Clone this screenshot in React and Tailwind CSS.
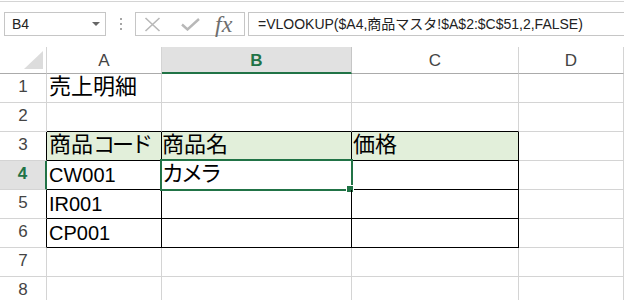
import { Fragment } from "react";

function XIcon() {
  return (
    <svg width="17" height="15" viewBox="0 0 17 15" className="block">
      <path d="M1.5 1 L15.5 14 M15.5 1 L1.5 14" stroke="#b8b8b8" strokeWidth="1.6" fill="none" />
    </svg>
  );
}

function CheckIcon() {
  return (
    <svg width="19" height="13" viewBox="0 0 19 13" className="block">
      <path d="M1 6.5 L6.5 11.5 L18 1" stroke="#b8b8b8" strokeWidth="2.4" fill="none" />
    </svg>
  );
}

function Toolbar() {
  return (
    <div className="h-[46px]">
      <div className="mt-px h-px bg-[#d4d4d4]" />
      <div className="flex pt-[10px] font-['Liberation_Sans','Noto_Sans_CJK_JP',sans-serif] text-[13px] text-[#222]">
        <div className="ml-[4px] flex h-[24px] w-[102px] items-center justify-between border border-[#c6c6c6] pl-[7px] pr-[5px]">
          <span className="text-[14px]">B4</span>
          <svg width="8" height="4" viewBox="0 0 8 4" className="block">
            <path d="M0 0 L8 0 L4 4 Z" fill="#666" />
          </svg>
        </div>
        <div className="ml-[14px] mr-[13px] flex flex-col items-center justify-center gap-[3px]">
          <span className="block h-[2px] w-[2px] bg-[#a6a6a6]" />
          <span className="block h-[2px] w-[2px] bg-[#a6a6a6]" />
          <span className="block h-[2px] w-[2px] bg-[#a6a6a6]" />
        </div>
        <div className="flex h-[24px] w-[110px] items-center border border-[#c6c6c6] pl-[8px]">
          <XIcon />
          <span className="ml-[20px]">
            <CheckIcon />
          </span>
          <span className="ml-[15px] font-['Liberation_Serif',serif] text-[24px] italic leading-none text-[#6e6e6e]">fx</span>
        </div>
        <div className="ml-[3px] flex h-[24px] flex-1 items-center border border-r-0 border-[#c6c6c6] pl-[9px] text-[14px] whitespace-nowrap">
          =VLOOKUP($A4,商品マスタ!$A$2:$C$51,2,FALSE)
        </div>
      </div>
    </div>
  );
}

function Jp({ children }) {
  return <span className="block pb-[4px] text-[22px] leading-[22px] whitespace-nowrap">{children}</span>;
}

function Kana({ children }) {
  return <span className="tracking-[-3px]">{children}</span>;
}

function En({ children }) {
  return <span className="block pb-[4px] text-[20px] leading-[20px]">{children}</span>;
}

const rows = [
  { n: 1, a: <Jp>売上明細</Jp> },
  { n: 2 },
  {
    n: 3,
    a: (
      <Jp>
        商品<Kana>コード</Kana>
      </Jp>
    ),
    b: <Jp>商品名</Jp>,
    c: <Jp>価格</Jp>,
    head: true,
  },
  {
    n: 4,
    a: <En>CW001</En>,
    b: (
      <Jp>
        <Kana>カメラ</Kana>
      </Jp>
    ),
    sel: true,
  },
  { n: 5, a: <En>IR001</En> },
  { n: 6, a: <En>CP001</En> },
  { n: 7 },
  { n: 8 },
];

function Sheet() {
  return (
    <div className="grid grid-cols-[47px_115px_190px_167px_1fr] font-['Liberation_Sans','Noto_Sans_CJK_JP',sans-serif] text-black">
      <div className="flex h-[27px] items-end justify-end border-r border-b border-r-[#d4d4d4] border-b-[#ababab] pb-[4px] pr-[3px]">
        <svg width="19" height="18" viewBox="0 0 19 18" className="block">
          <path d="M19 0 L19 18 L0 18 Z" fill="#dcdcdc" />
        </svg>
      </div>
      {["A", "B", "C", "D"].map((c) => (
        <div
          key={c}
          className={
            c === "B"
              ? "flex h-[27px] items-center justify-center border-r border-b-2 border-r-[#c6c6c6] border-b-[#217346] bg-[#e1e1e1] pt-[2px] text-[17px] font-bold text-[#217346]"
              : "flex h-[27px] items-center justify-center border-r border-b border-r-[#d4d4d4] border-b-[#ababab] pt-[1px] text-[17px] text-[#444]"
          }
        >
          {c}
        </div>
      ))}
      {rows.map((r) => {
        const inTable = r.n >= 3 && r.n <= 6;
        const above = r.n === 2;
        const cellBorder = inTable
          ? "border-r border-b border-black"
          : above
          ? "border-r border-b border-r-[#d4d4d4] border-b-black"
          : "border-r border-b border-[#d4d4d4]";
        const bg = r.head ? "bg-[#e2efda]" : "";
        return (
          <Fragment key={r.n}>
            <div
              className={
                r.sel
                  ? "flex h-[29px] items-end justify-center border-r-2 border-b border-r-[#217346] border-b-[#d4d4d4] bg-[#e1e1e1] pb-[3px] text-[17px] font-bold text-[#217346]"
                  : inTable
                  ? "flex h-[29px] items-end justify-center border-r border-b border-r-black border-b-[#d4d4d4] pb-[3px] text-[17px] text-[#444]"
                  : "flex h-[29px] items-end justify-center border-r border-b border-[#d4d4d4] pb-[3px] text-[17px] text-[#444]"
              }
            >
              {r.n}
            </div>
            <div className={`flex h-[29px] items-end pl-[2px] ${cellBorder} ${bg}`}>{r.a}</div>
            <div className={`relative flex h-[29px] items-end ${cellBorder} ${bg}`}>
              {r.b}
              {r.sel && (
                <>
                  <div className="pointer-events-none absolute -left-[2px] -top-[2px] h-[32px] w-[193px] border-2 border-[#217346]" />
                  <div className="pointer-events-none absolute left-[184px] top-[24px] h-[8px] w-[8px] border border-white bg-[#217346]" />
                </>
              )}
            </div>
            <div className={`flex h-[29px] items-end pl-[1px] ${cellBorder} ${bg}`}>{r.c}</div>
            <div className="h-[29px] border-r border-b border-[#d4d4d4]" />
          </Fragment>
        );
      })}
    </div>
  );
}

export default function App() {
  return (
    <div className="h-[300px] w-[624px] overflow-hidden bg-white">
      <Toolbar />
      <Sheet />
    </div>
  );
}
